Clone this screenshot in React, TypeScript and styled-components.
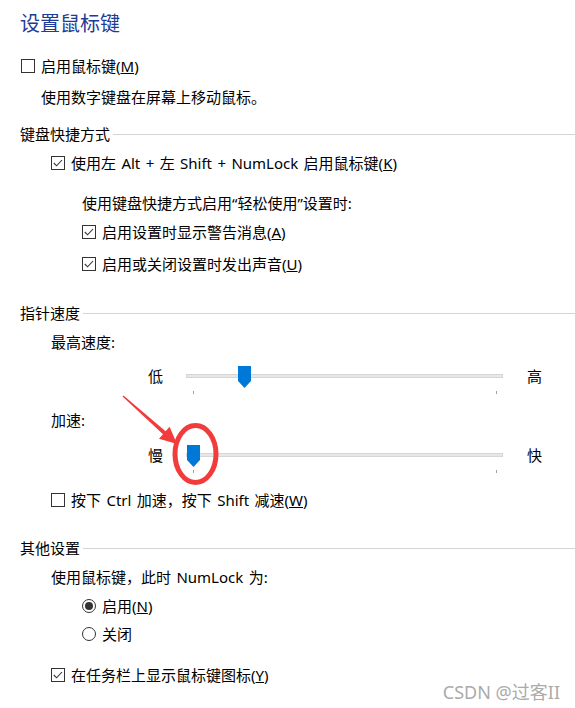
import React from "react";
import styled, { createGlobalStyle } from "styled-components";

const GlobalStyle = createGlobalStyle`
  html, body {
    margin: 0;
    padding: 0;
    background: #ffffff;
  }
  body {
    font-family: "Noto Sans", "Noto Sans CJK SC", sans-serif;
    font-size: 15px;
    color: #000000;
  }
`;

const Page = styled.div`
  position: relative;
  width: 575px;
  height: 708px;
  overflow: hidden;
  display: flex;
  flex-direction: column;
  padding-top: 10px;
  box-sizing: border-box;
`;

const Title = styled.h1`
  margin: 0 0 0 20px;
  height: 28px;
  font-size: 20px;
  font-weight: 400;
  line-height: 28px;
  color: #1e3c96;
`;

const Line = styled.div<{ $top: number; $indent: number }>`
  margin-top: ${(p) => p.$top}px;
  padding-left: ${(p) => p.$indent}px;
  height: 24px;
  line-height: 24px;
  display: flex;
  align-items: center;
  gap: 6px;
  white-space: nowrap;
  word-spacing: 1.5px;
`;

const Section = styled.div<{ $top: number }>`
  margin-top: ${(p) => p.$top}px;
  padding-left: 20px;
  height: 24px;
  line-height: 24px;
  display: flex;
  align-items: center;
  gap: 3px;
  white-space: nowrap;

  &::after {
    content: "";
    flex: 1;
    height: 1px;
    background: #d5d5d5;
  }
`;

const Box = styled.span`
  width: 14px;
  height: 14px;
  flex: none;
  box-sizing: border-box;
  border: 1px solid #333333;
  background: #ffffff;
  display: flex;
  align-items: center;
  justify-content: center;
`;

const Radio = styled.span<{ $on?: boolean }>`
  width: 14px;
  height: 14px;
  flex: none;
  box-sizing: border-box;
  border: 1px solid #333333;
  border-radius: 50%;
  background: #ffffff;
  display: flex;
  align-items: center;
  justify-content: center;

  &::after {
    content: "";
    width: 8px;
    height: 8px;
    border-radius: 50%;
    background: ${(p) => (p.$on ? "#333333" : "transparent")};
  }
`;

const SliderRow = styled.div<{ $top: number }>`
  margin-top: ${(p) => p.$top}px;
  padding-left: 148px;
  height: 36px;
  display: flex;
  align-items: flex-start;
`;

const End = styled.span`
  width: 15px;
  height: 24px;
  line-height: 24px;
  text-align: center;
`;

const Track = styled.div`
  position: relative;
  width: 317px;
  height: 36px;
  margin: 0 24px 0 23px;
`;

const Groove = styled.div`
  position: absolute;
  left: 0;
  right: 0;
  top: 10px;
  height: 4px;
  box-sizing: border-box;
  background: #e7e7e7;
  border: 1px solid #d6d6d6;
`;

const Tick = styled.div<{ $left: number }>`
  position: absolute;
  top: 27px;
  left: ${(p) => p.$left}px;
  width: 1px;
  height: 3px;
  background: #a0a0a0;
`;

const ThumbSvg = styled.svg`
  position: absolute;
  top: 2px;
`;

const Overlay = styled.svg`
  position: absolute;
  left: 0;
  top: 0;
  pointer-events: none;
`;

const Watermark = styled.div`
  position: absolute;
  right: 15px;
  bottom: 6px;
  font-size: 18px;
  line-height: 20px;
  color: #ababab;
  white-space: nowrap;
`;

function Check({ checked }: { checked?: boolean }) {
  return (
    <Box>
      {checked && (
        <svg width="12" height="12" viewBox="0 0 12 12">
          <path d="M1.8 6 L4.6 8.8 L10 3" fill="none" stroke="#333" strokeWidth="1.1" />
        </svg>
      )}
    </Box>
  );
}

function Slider({ top, low, high, pos }: { top: number; low: string; high: string; pos: number }) {
  return (
    <SliderRow $top={top}>
      <End>{low}</End>
      <Track>
        <Groove />
        <Tick $left={7} />
        <Tick $left={310} />
        <ThumbSvg width="13" height="22" viewBox="0 0 13 22" style={{ left: pos }}>
          <path d="M0 0H13V15L6.5 22L0 15Z" fill="#0078d7" />
        </ThumbSvg>
      </Track>
      <End>{high}</End>
    </SliderRow>
  );
}

export default function App() {
  return (
    <Page>
      <GlobalStyle />
      <Title>设置鼠标键</Title>
      <Line $top={16} $indent={21}>
        <Check />
        <span>
          启用鼠标键(<u>M</u>)
        </span>
      </Line>
      <Line $top={7} $indent={41}>
        使用数字键盘在屏幕上移动鼠标。
      </Line>

      <Section $top={13}>键盘快捷方式</Section>
      <Line $top={5} $indent={51}>
        <Check checked />
        <span>
          使用左 Alt + 左 Shift + NumLock 启用鼠标键(<u>K</u>)
        </span>
      </Line>
      <Line $top={16} $indent={82}>
        使用键盘快捷方式启用“轻松使用”设置时:
      </Line>
      <Line $top={5} $indent={82}>
        <Check checked />
        <span>
          启用设置时显示警告消息(<u>A</u>)
        </span>
      </Line>
      <Line $top={8} $indent={82}>
        <Check checked />
        <span>
          启用或关闭设置时发出声音(<u>U</u>)
        </span>
      </Line>

      <Section $top={25}>指针速度</Section>
      <Line $top={5} $indent={51}>
        最高速度:
      </Line>
      <Slider top={10} low="低" high="高" pos={52} />
      <Line $top={8} $indent={51}>
        加速:
      </Line>
      <Slider top={11} low="慢" high="快" pos={1} />
      <Line $top={9} $indent={51}>
        <Check />
        <span>
          按下 Ctrl 加速，按下 Shift 减速(<u>W</u>)
        </span>
      </Line>

      <Section $top={24}>其他设置</Section>
      <Line $top={5} $indent={51}>
        使用鼠标键，此时 NumLock 为:
      </Line>
      <Line $top={5} $indent={82}>
        <Radio $on />
        <span>
          启用(<u>N</u>)
        </span>
      </Line>
      <Line $top={4} $indent={82}>
        <Radio />
        <span>关闭</span>
      </Line>
      <Line $top={17} $indent={51}>
        <Check checked />
        <span>
          在任务栏上显示鼠标键图标(<u>Y</u>)
        </span>
      </Line>

      <Overlay width="575" height="708" viewBox="0 0 575 708">
        <ellipse cx="195.5" cy="454" rx="20.5" ry="28.5" fill="none" stroke="#f23b3b" strokeWidth="5" />
        <polygon
          points="122.5,396.5 163,434.2 159,438.7 177,444 169.6,426.7 165.6,431.2 123.5,395.5"
          fill="#f23b3b"
        />
      </Overlay>
      <Watermark>CSDN @过客II</Watermark>
    </Page>
  );
}
